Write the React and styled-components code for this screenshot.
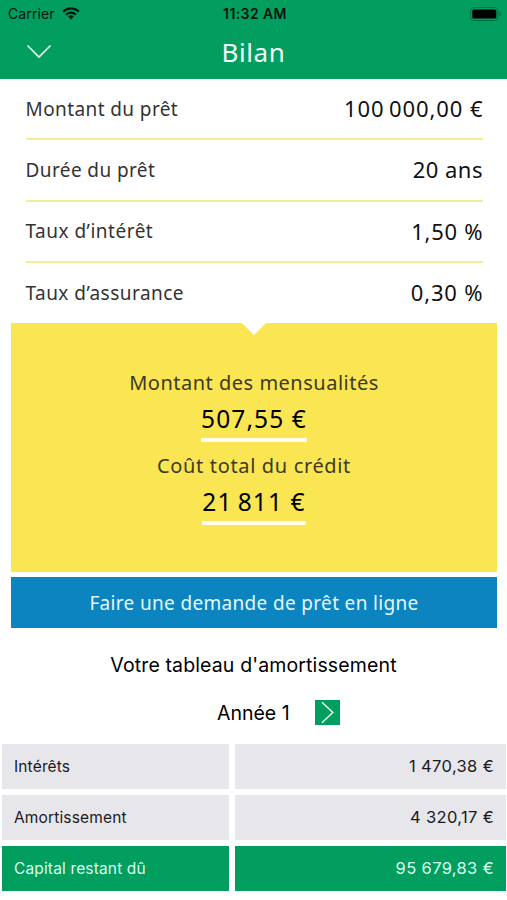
import React from 'react';
import styled, { createGlobalStyle } from 'styled-components';

const loanInfos = [
  { label: 'Montant du prêt', value: '100\u2009000,00 €', labelGap: 0.4, valueGap: 0.9 },
  { label: 'Durée du prêt', value: '20 ans', labelGap: 0.4, valueGap: 0.5 },
  { label: 'Taux d’intérêt', value: '1,50 %', labelGap: 0.5, valueGap: 0.7 },
  { label: 'Taux d’assurance', value: '0,30 %', labelGap: 0.47, valueGap: 0.8 },
];

const yearRows = [
  { label: 'Intérêts', value: '1 470,38 €' },
  { label: 'Amortissement', value: '4 320,17 €' },
  { label: 'Capital restant dû', value: '95 679,83 €', active: true },
];

function WifiIcon() {
  return (
    <svg width="18" height="13" viewBox="0 0 18 13">
      <g fill="none" stroke="#03150d" strokeWidth="2.3">
        <path d="M1.2 4.7a11 11 0 0 1 15.6 0" />
        <path d="M4.1 7.7a6.9 6.9 0 0 1 9.8 0" />
      </g>
      <path d="M9 12.4 6.2 9.6a4 4 0 0 1 5.6 0z" fill="#03150d" />
    </svg>
  );
}

function BatteryIcon() {
  return (
    <svg width="32" height="14" viewBox="0 0 32 14">
      <rect x="0.5" y="0.5" width="27.5" height="13" rx="3.5" fill="none" stroke="#04703f" />
      <rect x="2.3" y="2.5" width="24" height="9" rx="1.6" fill="#000" />
      <path d="M29.6 4.7c1.8.8 1.8 3.8 0 4.6z" fill="#04703f" />
    </svg>
  );
}

function App() {
  return (
    <Screen>
      <GlobalStyle />
      <Header>
        <StatusBar>
          <Carrier>
            Carrier
            <WifiIcon />
          </Carrier>
          <Clock>11:32 AM</Clock>
          <Battery>
            <BatteryIcon />
          </Battery>
        </StatusBar>
        <NavBar>
          <BackButton aria-label="Fermer">
            <svg width="26" height="15" viewBox="0 0 26 15">
              <path d="M1.5 1.5 13 13 24.5 1.5" fill="none" stroke="#e9fff4" strokeWidth="1.6" />
            </svg>
          </BackButton>
          <Title>Bilan</Title>
        </NavBar>
      </Header>

      <InfoList>
        {loanInfos.map((info) => (
          <InfoRow key={info.label}>
            <InfoLabel $gap={info.labelGap}>{info.label}</InfoLabel>
            <InfoValue $gap={info.valueGap}>{info.value}</InfoValue>
          </InfoRow>
        ))}
      </InfoList>

      <Summary>
        <Notch />
        <SummaryLabel $gap={0.5}>Montant des mensualités</SummaryLabel>
        <SummaryValue>507,55 €</SummaryValue>
        <SummaryLabel $gap={0.65}>Coût total du crédit</SummaryLabel>
        <SummaryValue>21{'\u2009'}811 €</SummaryValue>
      </Summary>

      <RequestButton>Faire une demande de prêt en ligne</RequestButton>

      <TableTitle>Votre tableau d'amortissement</TableTitle>
      <YearPicker>
        <YearLabel>Année 1</YearLabel>
        <NextButton aria-label="Année suivante">
          <svg width="25" height="25" viewBox="0 0 25 25">
            <path d="M7 2.2 17.8 12.5 7 22.8" fill="none" stroke="#e9fff4" strokeWidth="1.4" />
          </svg>
        </NextButton>
      </YearPicker>

      <Table>
        {yearRows.map((row) => (
          <React.Fragment key={row.label}>
            <LabelCell $active={row.active}>{row.label}</LabelCell>
            <ValueCell $active={row.active}>{row.value}</ValueCell>
          </React.Fragment>
        ))}
      </Table>
    </Screen>
  );
}

export default App;

const GlobalStyle = createGlobalStyle`
  * {
    box-sizing: border-box;
  }
  body {
    margin: 0;
    background: #fff;
  }
`;
const Screen = styled.div`
  width: 507px;
  height: 900px;
  overflow: hidden;
  background: #fff;
  color: #000;
  font-family: 'Noto Sans', sans-serif;
`;
const Header = styled.header`
  height: 79px;
  background: #029e60;
`;
const StatusBar = styled.div`
  display: grid;
  grid-template-columns: 1fr auto 1fr;
  align-items: center;
  height: 27px;
  padding: 0 5px 0 8px;
  color: #03150d;
  font-family: Inter, sans-serif;
  font-size: 14px;
`;
const Carrier = styled.div`
  display: flex;
  align-items: center;
  gap: 7px;
  letter-spacing: 0.1px;
`;
const Clock = styled.div`
  font-weight: 600;
  letter-spacing: 0.4px;
`;
const Battery = styled.div`
  display: flex;
  justify-content: flex-end;
`;
const NavBar = styled.div`
  display: grid;
  grid-template-columns: 1fr auto 1fr;
  align-items: center;
  height: 49px;
`;
const BackButton = styled.button`
  display: flex;
  width: 26px;
  margin-left: 26px;
  padding: 0;
  border: none;
  background: none;
`;
const Title = styled.h1`
  margin: 0;
  color: #f0fff8;
  font-size: 26px;
  font-weight: 400;
  letter-spacing: 0.6px;
`;
const InfoList = styled.div`
  height: 244px;
  padding: 0 24.5px 0 25.5px;
`;
const InfoRow = styled.div`
  display: flex;
  align-items: center;
  justify-content: space-between;
  height: 61.3px;
  border-bottom: 2px solid #f7ec91;

  &:last-child {
    height: 60px;
    border-bottom: none;
  }
`;
const InfoLabel = styled.span`
  color: #333;
  font-size: 19px;
  letter-spacing: ${({ $gap }) => $gap}px;
`;
const InfoValue = styled.span`
  margin-right: ${({ $gap }) => -$gap}px;
  padding-bottom: 1px;
  color: #111;
  font-size: 22px;
  letter-spacing: ${({ $gap }) => $gap}px;
`;
const Summary = styled.section`
  position: relative;
  display: flex;
  flex-direction: column;
  align-items: center;
  height: 249px;
  margin: 0 10px 0 11px;
  padding-top: 45px;
  background: #fae553;
`;
const Notch = styled.div`
  position: absolute;
  top: 0;
  left: 50%;
  border: 12px solid transparent;
  border-top-color: #fff;
  border-bottom: none;
  transform: translateX(-50%);
`;
const SummaryLabel = styled.div`
  height: 30px;
  color: #3d3a20;
  font-size: 20px;
  line-height: 30px;
  letter-spacing: ${({ $gap }) => $gap}px;
`;
const SummaryValue = styled.div`
  height: 44px;
  margin-bottom: 9px;
  border-bottom: 4px solid #fffef0;
  font-size: 24.5px;
  line-height: 41px;
  letter-spacing: 1.1px;
`;
const RequestButton = styled.button`
  display: block;
  width: 486px;
  height: 51px;
  margin: 5px 0 0 11px;
  padding: 0;
  border: none;
  background: #0b84c0;
  color: #e4f8ff;
  font-family: inherit;
  font-size: 19px;
  letter-spacing: 0.33px;
`;
const TableTitle = styled.h2`
  height: 30px;
  margin: 22px 0 0;
  font-family: Inter, sans-serif;
  font-size: 19.5px;
  font-weight: 400;
  line-height: 30px;
  letter-spacing: 0.13px;
  text-align: center;
`;
const YearPicker = styled.div`
  display: flex;
  align-items: center;
  height: 25px;
  margin: 20px 0 0 217px;
  gap: 24px;
`;
const YearLabel = styled.span`
  width: 74px;
  font-family: Inter, sans-serif;
  font-size: 19.5px;
  white-space: nowrap;
`;
const NextButton = styled.button`
  display: flex;
  width: 25px;
  height: 25px;
  padding: 0;
  border: none;
  background: #029e60;
`;
const Table = styled.div`
  display: grid;
  grid-template-columns: 227px 271px;
  grid-auto-rows: 44.8px;
  gap: 6.3px 6px;
  margin: 19px 1px 0 2px;
  font-family: Inter, sans-serif;
`;
const Cell = styled.div`
  display: flex;
  align-items: center;
  padding: 0 12px;
  background: ${({ $active }) => ($active ? '#029e60' : '#e7e6eb')};
  color: ${({ $active }) => ($active ? '#d9ffee' : '#1a1a1c')};
`;
const LabelCell = styled(Cell)`
  font-size: 15.5px;
  letter-spacing: 0.15px;
`;
const ValueCell = styled(Cell)`
  justify-content: flex-end;
  padding-bottom: 1px;
  font-size: 16.5px;
  letter-spacing: 0.35px;
`;
